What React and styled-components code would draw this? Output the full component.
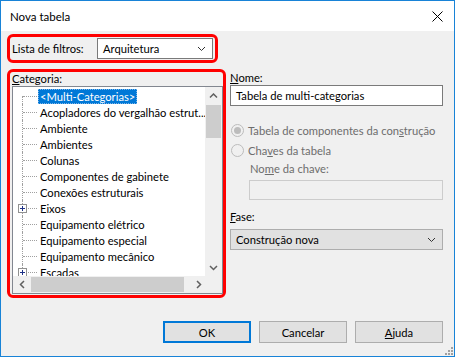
import React from 'react';
import styled, { createGlobalStyle } from 'styled-components';

const FONT = 'Lato, "Noto Sans", "Liberation Sans", sans-serif';

const GlobalStyle = createGlobalStyle`
  html, body { margin: 0; padding: 0; background: #fff; }
  body { font-family: ${FONT}; font-size: 11.2px; color: #000; }
  * { box-sizing: border-box; }
`;

const Window = styled.div`
  position: relative;
  width: 455px;
  height: 357px;
  border: 1px solid #1883d7;
  background: #f0f0f0;
  display: flex;
  flex-direction: column;
`;

const TitleBar = styled.div`
  height: 30px;
  flex: none;
  background: #fff;
  display: flex;
  align-items: center;
  justify-content: space-between;
  padding: 0 11px 0 9px;
  font-size: 11.5px;
`;

const Body = styled.div`
  flex: 1;
  display: flex;
  flex-direction: column;
  padding: 3px 11px 13px 6px;
`;

const Marked = styled.div`
  border: 3px solid #f00;
  border-radius: 6px;
`;

const FilterBox = styled(Marked)`
  width: 211px;
  height: 29px;
  display: flex;
  align-items: center;
  justify-content: space-between;
  padding: 0 2px;
`;

const Select = styled.div`
  width: ${p => p.$w || 116}px;
  height: 21px;
  display: flex;
  align-items: center;
  justify-content: space-between;
  padding: 0 6px 0 5px;
  background: ${p => (p.$flat ? '#e1e1e1' : '#fff')};
  border: 1px solid ${p => (p.$flat ? '#adadad' : '#7a7a7a')};
`;

const MainRow = styled.div`
  display: flex;
  gap: 4px;
  margin-top: 6px;
`;

const CategoryBox = styled(Marked)`
  width: 219px;
  height: 229px;
  padding: 0 0 0 2px;
  display: flex;
  flex-direction: column;
`;

const Label = styled.div`
  height: ${p => p.$h || 14}px;
  display: flex;
  align-items: flex-end;
  line-height: 14px;
  white-space: nowrap;
  color: ${p => (p.$disabled ? '#6d6d6d' : '#000')};
  padding-left: ${p => p.$indent || 0}px;
`;

const TreeBox = styled.div`
  width: 211px;
  height: 208px;
  border: 1px solid #828790;
  background: #fff;
  display: flex;
  flex-direction: column;
`;

const TreeTop = styled.div`
  flex: 1;
  display: flex;
  min-height: 0;
`;

const List = styled.div`
  flex: 1;
  overflow: hidden;
  padding-top: 1px;
`;

const Row = styled.div`
  height: 16px;
  display: flex;
  align-items: center;
  white-space: nowrap;
`;

const Gutter = styled.div`
  position: relative;
  width: 24px;
  height: 16px;
  flex: none;
  display: flex;
  align-items: center;
  &::before {
    content: '';
    position: absolute;
    left: 9px;
    top: ${p => (p.$first ? 8 : 0)}px;
    bottom: 0;
    border-left: 1px dotted #a0a0a0;
  }
  &::after {
    content: '';
    position: absolute;
    left: 10px;
    right: 0;
    top: 8px;
    border-top: 1px dotted #a0a0a0;
  }
`;

const Plus = styled.span`
  position: relative;
  z-index: 1;
  margin-left: 5px;
  width: 9px;
  height: 9px;
  border: 1px solid #919191;
  background: #fff;
  display: flex;
  align-items: center;
  justify-content: center;
  svg { display: block; }
`;

const ItemText = styled.span`
  height: 15px;
  line-height: 15px;
  padding: 0 2px;
  margin-left: 1px;
  background: ${p => (p.$selected ? '#0078d7' : 'transparent')};
  color: ${p => (p.$selected ? '#fff' : '#000')};
  outline: ${p => (p.$selected ? '1px dotted #7fb4e6' : 'none')};
  outline-offset: -1px;
`;

const VBar = styled.div`
  width: 17px;
  flex: none;
  background: #f0f0f0;
  display: flex;
  flex-direction: column;
`;

const HBar = styled.div`
  height: 17px;
  flex: none;
  background: #f0f0f0;
  display: flex;
`;

const Arrow = styled.div`
  width: 17px;
  height: 17px;
  flex: none;
  display: flex;
  align-items: center;
  justify-content: center;
`;

const VTrack = styled.div`
  flex: 1;
  padding: 1px 1px;
  div {
    height: 33px;
    background: #cdcdcd;
  }
`;

const HTrack = styled.div`
  flex: 1;
  padding: 1px 6px 1px 1px;
  div {
    height: 100%;
    width: 153px;
    background: #cdcdcd;
  }
`;

const Corner = styled.div`
  width: 17px;
  height: 17px;
  background: #f0f0f0;
`;

const RightCol = styled.div`
  width: 213px;
  display: flex;
  flex-direction: column;
`;

const TextInput = styled.div`
  height: ${p => p.$h || 21}px;
  margin-left: ${p => p.$indent || 0}px;
  border: 1px solid ${p => (p.$disabled ? '#cccccc' : '#7a7a7a')};
  background: ${p => (p.$disabled ? '#f0f0f0' : '#fff')};
  display: flex;
  align-items: center;
  padding-left: 5px;
`;

const RadioRow = styled.div`
  height: 20px;
  display: flex;
  align-items: center;
  gap: 4px;
  white-space: nowrap;
  color: #6d6d6d;
  padding-left: 1px;
`;

const Radio = styled.span`
  width: 13px;
  height: 13px;
  flex: none;
  border-radius: 50%;
  border: 1px solid #bcbcbc;
  background: #f0f0f0;
  display: flex;
  align-items: center;
  justify-content: center;
  &::after {
    content: '';
    display: ${p => (p.$checked ? 'block' : 'none')};
    width: 7px;
    height: 7px;
    border-radius: 50%;
    background: #bcbcbc;
  }
`;

const Buttons = styled.div`
  margin-top: auto;
  display: flex;
  justify-content: flex-end;
  gap: 8px;
`;

const Button = styled.div`
  width: 88px;
  height: 22px;
  display: flex;
  align-items: center;
  justify-content: center;
  background: #e1e1e1;
  border: ${p => (p.$default ? '2px solid #0078d7' : '1px solid #adadad')};
`;

const Grip = styled.svg`
  position: absolute;
  right: 1px;
  bottom: 1px;
`;

const Chevron = ({ dir = 'down', color = '#606060', w = 9 }) => {
  const pts = {
    down: '1,1 4.5,4.5 8,1',
    up: '1,4.5 4.5,1 8,4.5',
  };
  if (dir === 'left' || dir === 'right') {
    return (
      <svg width="6" height="9" viewBox="0 0 6 9">
        <polyline
          points={dir === 'left' ? '5,1 1.5,4.5 5,8' : '1,1 4.5,4.5 1,8'}
          fill="none"
          stroke={color}
          strokeWidth="1.5"
        />
      </svg>
    );
  }
  return (
    <svg width={w} height="6" viewBox="0 0 9 6">
      <polyline points={pts[dir]} fill="none" stroke={color} strokeWidth={color === '#606060' ? 1.5 : 1} />
    </svg>
  );
};

const categories = [
  { name: '<Multi-Categorias>', selected: true },
  { name: 'Acopladores do vergalhão estrut...' },
  { name: 'Ambiente' },
  { name: 'Ambientes' },
  { name: 'Colunas' },
  { name: 'Componentes de gabinete' },
  { name: 'Conexões estruturais' },
  { name: 'Eixos', expandable: true },
  { name: 'Equipamento elétrico' },
  { name: 'Equipamento especial' },
  { name: 'Equipamento mecânico' },
  { name: 'Escadas', expandable: true },
];

export default function App() {
  return (
    <>
      <GlobalStyle />
      <Window>
        <TitleBar>
          <span>Nova tabela</span>
          <svg width="11" height="11" viewBox="0 0 11 11">
            <path d="M0.5 0.5 L10.5 10.5 M10.5 0.5 L0.5 10.5" stroke="#000" strokeWidth="1" />
          </svg>
        </TitleBar>
        <Body>
          <FilterBox>
            <span>Lista de filtros:</span>
            <Select>
              <span>Arquitetura</span>
              <Chevron color="#333" />
            </Select>
          </FilterBox>

          <MainRow>
            <CategoryBox>
              <Label $h={14}>
                <span><u>C</u>ategoria:</span>
              </Label>
              <TreeBox>
                <TreeTop>
                  <List>
                    {categories.map((c, i) => (
                      <Row key={c.name}>
                        <Gutter $first={i === 0}>
                          {c.expandable && (
                            <Plus>
                              <svg width="7" height="7" viewBox="0 0 7 7">
                                <path d="M1 3.5 H6 M3.5 1 V6" stroke="#1e3287" strokeWidth="1" />
                              </svg>
                            </Plus>
                          )}
                        </Gutter>
                        <ItemText $selected={c.selected}>{c.name}</ItemText>
                      </Row>
                    ))}
                  </List>
                  <VBar>
                    <Arrow><Chevron dir="up" /></Arrow>
                    <VTrack><div /></VTrack>
                    <Arrow><Chevron dir="down" /></Arrow>
                  </VBar>
                </TreeTop>
                <HBar>
                  <Arrow><Chevron dir="left" /></Arrow>
                  <HTrack><div /></HTrack>
                  <Arrow><Chevron dir="right" /></Arrow>
                  <Corner />
                </HBar>
              </TreeBox>
            </CategoryBox>

            <RightCol>
              <Label $h={16}>
                <span><u>N</u>ome:</span>
              </Label>
              <TextInput>Tabela de multi-categorias</TextInput>
              <div style={{ height: 14 }} />
              <RadioRow>
                <Radio $checked />
                <span>Tabela de componentes da con<u>s</u>trução</span>
              </RadioRow>
              <RadioRow>
                <Radio />
                <span>Cha<u>v</u>es da tabela</span>
              </RadioRow>
              <Label $h={16} $indent={20} $disabled>
                <span>No<u>m</u>e da chave:</span>
              </Label>
              <div style={{ height: 4 }} />
              <TextInput $disabled $h={20} $indent={19} />
              <Label $h={24}>
                <span><u>F</u>ase:</span>
              </Label>
              <div style={{ height: 5 }} />
              <Select $w={213} $flat>
                <span>Construção nova</span>
                <Chevron color="#333" />
              </Select>
            </RightCol>
          </MainRow>

          <Buttons>
            <Button $default>OK</Button>
            <Button>Cancelar</Button>
            <Button><span><u>A</u>juda</span></Button>
          </Buttons>
        </Body>
        <Grip width="8" height="8" viewBox="0 0 8 8">
          <g fill="#a0a0a0">
            <rect x="6" y="0" width="2" height="2" />
            <rect x="3" y="3" width="2" height="2" />
            <rect x="6" y="3" width="2" height="2" />
            <rect x="0" y="6" width="2" height="2" />
            <rect x="3" y="6" width="2" height="2" />
            <rect x="6" y="6" width="2" height="2" />
          </g>
        </Grip>
      </Window>
    </>
  );
}
